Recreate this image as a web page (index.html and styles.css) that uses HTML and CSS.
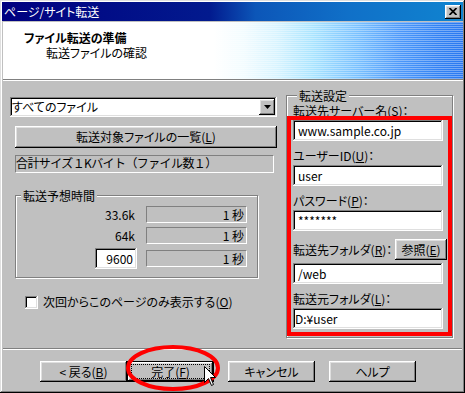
FILE: index.html
```html
<!DOCTYPE html>
<html lang="ja">
<head>
    <meta charset="UTF-8">
    <title>ページ/サイト転送</title>
    <link rel="stylesheet" href="styles.css">
</head>
<body>
    <div class="window">
        <div class="titlebar">
            <span class="title">ページ/サイト転送</span>
            <span class="close raised">
                <svg width="8" height="7" viewBox="0 0 8 7"><path d="M0.5 0 L7.5 7 M7.5 0 L0.5 7" stroke="#000" stroke-width="1.7"/></svg>
            </span>
        </div>
        <div class="header">
            <div class="header_text">
                <div class="header_title">ファイル転送の準備</div>
                <div class="header_sub">転送ファイルの確認</div>
            </div>
            <div class="header_art"></div>
        </div>

        <div class="main">
            <div class="left">
                <div class="combo sunken">
                    <span class="combo_text">すべてのファイル</span>
                    <span class="combo_btn raised">
                        <svg width="7" height="4" viewBox="0 0 7 4"><path d="M0 0 H7 L3.5 4 Z" fill="#000"/></svg>
                    </span>
                </div>
                <div class="btn wide raised">転送対象ファイルの一覧(<u>L</u>)</div>
                <div class="static summary">合計サイズ１Kバイト（ファイル数１）</div>

                <fieldset class="group time">
                    <legend>転送予想時間</legend>
                    <div class="rows">
                        <span class="speed">33.6k</span>
                        <span class="static secs">1 秒</span>
                        <span class="speed">64k</span>
                        <span class="static secs">1 秒</span>
                        <span class="speed_input sunken">9600</span>
                        <span class="static secs">1 秒</span>
                    </div>
                </fieldset>

                <div class="check">
                    <span class="check_box sunken"></span>
                    <span>次回からこのページのみ表示する(<u>O</u>)</span>
                </div>
            </div>

            <div class="right">
                <fieldset class="group settings">
                    <legend>転送設定</legend>
                    <div class="field">
                        <div class="label">転送先サーバー名(<u>S</u>)：</div>
                        <div class="input sunken">www.sample.co.jp</div>
                    </div>
                    <div class="field">
                        <div class="label">ユーザーID(<u>U</u>)：</div>
                        <div class="input sunken">user</div>
                    </div>
                    <div class="field">
                        <div class="label">パスワード(<u>P</u>)：</div>
                        <div class="input sunken">*******</div>
                    </div>
                    <div class="field">
                        <div class="label_row">
                            <span class="label">転送先フォルダ(<u>R</u>)：</span>
                            <span class="btn browse raised">参照(<u>E</u>)</span>
                        </div>
                        <div class="input sunken">/web</div>
                    </div>
                    <div class="field">
                        <div class="label">転送元フォルダ(<u>L</u>)：</div>
                        <div class="input sunken tight">D:¥user</div>
                    </div>
                </fieldset>
                <div class="highlight"></div>
            </div>
        </div>

        <div class="separator"></div>

        <div class="buttons">
            <div class="pair">
                <div class="btn raised">&lt; 戻る(<u>B</u>)</div>
                <div class="btn default"><span class="focus">完了(<u>F</u>)</span></div>
            </div>
            <div class="btn raised">キャンセル</div>
            <div class="btn raised">ヘルプ</div>
        </div>

        <svg class="ring" width="94" height="46" viewBox="0 0 94 46">
            <ellipse cx="47" cy="23" rx="45" ry="21" fill="none" stroke="#ff0000" stroke-width="4"/>
        </svg>
        <svg class="cursor" width="13" height="21" viewBox="0 0 13 21">
            <path d="M0.5 0.5 V16.5 L4.5 12.5 L7.5 19.5 L9.5 18.5 L6.5 11.5 H11.5 Z" fill="#fff" stroke="#000" stroke-width="1"/>
        </svg>
    </div>
</body>
</html>
```

FILE: styles.css
```css
body {
    margin: 0;
    font: 12px/14px "Noto Sans CJK JP", sans-serif;
    font-feature-settings: "palt";
    color: #000;
}

u {
    text-decoration: underline;
    text-underline-offset: 1px;
}

.window {
    position: relative;
    width: 465px;
    height: 393px;
    box-sizing: border-box;
    padding: 2px;
    background: #c0c0c0;
    box-shadow: inset -1px -1px #000, inset 1px 1px #dfdfdf, inset -2px -2px #808080, inset 2px 2px #fff;
    display: flex;
    flex-direction: column;
    overflow: hidden;
}

.raised {
    background: #c0c0c0;
    box-shadow: inset -1px -1px #000, inset 1px 1px #fff, inset -2px -2px #808080, inset 2px 2px #dfdfdf;
}

.sunken {
    background: #fff;
    box-shadow: inset -1px -1px #fff, inset 1px 1px #808080, inset -2px -2px #dfdfdf, inset 2px 2px #000;
}

.static {
    box-sizing: border-box;
    border-top: 1px solid #808080;
    border-left: 1px solid #808080;
    border-right: 1px solid #fff;
    border-bottom: 1px solid #fff;
}

/* title bar */
.titlebar {
    height: 19px;
    display: flex;
    align-items: center;
    justify-content: space-between;
    padding: 0 2px;
    background: linear-gradient(90deg, #000080 0%, #021a8e 45%, #0c56b8 55%, #1070c8 75%, #1084d0 100%);
    color: #fff;
}

.close {
    width: 16px;
    height: 14px;
    display: flex;
    align-items: center;
    justify-content: center;
}

/* header */
.header {
    height: 57px;
    margin: 1px 0 0 1px;
    display: flex;
    background: #fff;
    border-bottom: 1px solid #808080;
    box-shadow: 0 1px 0 #fff;
}

.header_text {
    flex: 1;
    padding: 9px 0 0 21px;
    line-height: 14px;
}

.header_title {
    font-weight: bold;
}

.header_sub {
    margin-top: 1px;
    padding-left: 22px;
}

.header_art {
    width: 249px;
    background:
        repeating-linear-gradient(180deg, rgba(255, 255, 255, 0.35) 0 1px, transparent 1px 2px),
        linear-gradient(90deg, #fff 0%, #f2fcff 12%, #d8f4ff 25%, #a8e4ff 40%, #78c0ff 58%, #4c98fa 75%, #3282f4 90%, #2a78f0 100%);
}

/* main area */
.main {
    display: flex;
    gap: 9px;
    margin-top: 1px;
    padding-left: 8px;
}

.left {
    width: 267px;
    display: flex;
    flex-direction: column;
    padding-top: 16px;
}

.combo {
    height: 20px;
    display: flex;
    align-items: center;
    justify-content: space-between;
    padding: 0 2px;
}

.combo_btn {
    width: 16px;
    height: 16px;
    display: flex;
    align-items: center;
    justify-content: center;
}

.btn {
    height: 21px;
    width: 87px;
    box-sizing: border-box;
    display: flex;
    align-items: center;
    justify-content: center;
}

.wide {
    width: 262px;
    height: 22px;
    margin: 9px 0 0 5px;
}

.summary {
    width: 259px;
    height: 18px;
    margin: 7px 0 0 5px;
    font-feature-settings: normal;
    letter-spacing: -0.6px;
}

.group {
    margin: 0;
    padding: 0;
    min-width: 0;
    border: 1px solid #808080;
    box-shadow: inset 1px 1px #fff, 1px 1px 0 #fff;
}

.group legend {
    padding: 0 2px;
    margin-left: 5px;
    line-height: 13px;
    background: #c0c0c0;
}

.time {
    width: 243px;
    box-sizing: border-box;
    margin: 16px 0 0 5px;
    padding: 4px 10px 8px 0;
}

.rows {
    display: grid;
    grid-template-columns: 121px 101px;
    column-gap: 9px;
    row-gap: 4px;
    align-items: center;
}

.speed {
    text-align: right;
    padding-right: 2px;
}

.speed_input {
    justify-self: end;
    width: 42px;
    height: 21px;
    box-sizing: border-box;
    padding-right: 4px;
    text-align: right;
    line-height: 21px;
}

.secs {
    height: 17px;
    line-height: 15px;
    text-align: right;
    padding-right: 2px;
}

.check {
    display: flex;
    align-items: center;
    gap: 5px;
    margin: 17px 0 0 15px;
}

.check_box {
    width: 13px;
    height: 13px;
}

/* right settings */
.right {
    position: relative;
    width: 167px;
    padding-top: 8px;
}

.settings {
    width: 167px;
    box-sizing: border-box;
    padding: 2px 9px 8px 6px;
}

.settings legend {
    margin-left: 4px;
}

.settings .label {
    line-height: 13px;
}

.field + .field {
    margin-top: 8px;
}

.label_row {
    display: flex;
    align-items: center;
    justify-content: space-between;
    margin-right: -4px;
}

.browse {
    width: 52px;
    height: 21px;
}

.input {
    margin-top: 3px;
    height: 21px;
    box-sizing: border-box;
    padding: 0 5px;
    line-height: 21px;
}

.input.tight {
    padding-left: 2px;
}

.highlight {
    position: absolute;
    left: 1px;
    top: 35px;
    width: 165px;
    height: 220px;
    box-sizing: border-box;
    border: 4px solid #ff0000;
}

/* bottom */
.separator {
    height: 1px;
    margin: 10px 1px 0 1px;
    background: #808080;
    box-shadow: 0 1px 0 #fff;
}

.buttons {
    display: flex;
    gap: 14px;
    margin-top: 12px;
    padding-left: 38px;
}

.pair {
    display: flex;
}

.default {
    padding: 3px 4px;
    background: #c0c0c0;
    box-shadow: inset 0 0 0 1px #000, inset -2px -2px #000, inset 2px 2px #fff, inset -3px -3px #808080, inset 3px 3px #dfdfdf;
}

.focus {
    flex: 1;
    align-self: stretch;
    display: flex;
    align-items: center;
    justify-content: center;
    border: 1px dotted #000;
}

.ring {
    position: absolute;
    left: 126px;
    top: 345px;
}

.cursor {
    position: absolute;
    left: 204px;
    top: 366px;
}
```
